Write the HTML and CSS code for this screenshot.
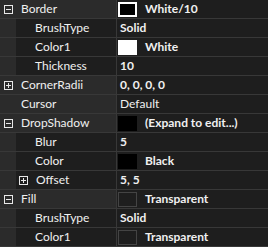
FILE: index.html
```html
<!DOCTYPE html>
<html>
<head>
<meta charset="utf-8">
<link rel="stylesheet" href="styles.css">
</head>
<body>
<div class="grid">
  <div class="row top">
    <div class="name"><svg class="exp" width="9" height="9" viewBox="0 0 9 9"><rect x="0.5" y="0.5" width="8" height="8" fill="none" stroke="#e8e8e8"/><path d="M2 4.5h5" stroke="#e8e8e8"/></svg><span class="label">Border</span></div>
    <div class="val"><span class="sw sw-outline"></span><span class="v">White/10</span></div>
  </div>
  <div class="row child">
    <div class="name"><span class="label">BrushType</span></div>
    <div class="val"><span class="v">Solid</span></div>
  </div>
  <div class="row child">
    <div class="name"><span class="label">Color1</span></div>
    <div class="val"><span class="sw sw-white"></span><span class="v">White</span></div>
  </div>
  <div class="row child">
    <div class="name"><span class="label">Thickness</span></div>
    <div class="val"><span class="v">10</span></div>
  </div>
  <div class="row top">
    <div class="name"><svg class="exp" width="9" height="9" viewBox="0 0 9 9"><rect x="0.5" y="0.5" width="8" height="8" fill="none" stroke="#e8e8e8"/><path d="M2 4.5h5M4.5 2v5" stroke="#e8e8e8"/></svg><span class="label">CornerRadii</span></div>
    <div class="val"><span class="v">0, 0, 0, 0</span></div>
  </div>
  <div class="row top">
    <div class="name"><span class="label nexp">Cursor</span></div>
    <div class="val"><span class="v reg">Default</span></div>
  </div>
  <div class="row top">
    <div class="name"><svg class="exp" width="9" height="9" viewBox="0 0 9 9"><rect x="0.5" y="0.5" width="8" height="8" fill="none" stroke="#e8e8e8"/><path d="M2 4.5h5" stroke="#e8e8e8"/></svg><span class="label">DropShadow</span></div>
    <div class="val"><span class="sw sw-black"></span><span class="v">(Expand to edit...)</span></div>
  </div>
  <div class="row child">
    <div class="name"><span class="label">Blur</span></div>
    <div class="val"><span class="v">5</span></div>
  </div>
  <div class="row child">
    <div class="name"><span class="label">Color</span></div>
    <div class="val"><span class="sw sw-black"></span><span class="v">Black</span></div>
  </div>
  <div class="row child">
    <div class="name sub"><svg class="exp" width="9" height="9" viewBox="0 0 9 9"><rect x="0.5" y="0.5" width="8" height="8" fill="none" stroke="#e8e8e8"/><path d="M2 4.5h5M4.5 2v5" stroke="#e8e8e8"/></svg><span class="label">Offset</span></div>
    <div class="val"><span class="v">5, 5</span></div>
  </div>
  <div class="row top">
    <div class="name"><svg class="exp" width="9" height="9" viewBox="0 0 9 9"><rect x="0.5" y="0.5" width="8" height="8" fill="none" stroke="#e8e8e8"/><path d="M2 4.5h5" stroke="#e8e8e8"/></svg><span class="label">Fill</span></div>
    <div class="val"><span class="sw sw-trans"></span><span class="v">Transparent</span></div>
  </div>
  <div class="row child">
    <div class="name"><span class="label">BrushType</span></div>
    <div class="val"><span class="v">Solid</span></div>
  </div>
  <div class="row child">
    <div class="name"><span class="label">Color1</span></div>
    <div class="val"><span class="sw sw-trans"></span><span class="v">Transparent</span></div>
  </div>
</div>
</body>
</html>
```

FILE: styles.css
```css
html, body {
  margin: 0;
  padding: 0;
  background: #1e1e1e;
}
.grid {
  width: 268px;
  font-family: Lato, "Noto Sans", sans-serif;
  font-size: 12px;
  color: #f0f0f0;
}
.row {
  display: flex;
  height: 18px;
  border-bottom: 1px solid #383838;
}
.name {
  width: 117px;
  border-right: 1px solid #383838;
  display: flex;
  align-items: center;
  background: #2b2b2b;
  box-sizing: border-box;
  padding-left: 4px;
}
.child .name {
  background: #1e1e1e;
  box-shadow: inset 16px 0 0 #2b2b2b;
  padding-left: 35px;
}
.child .name.sub {
  padding-left: 19px;
}
.exp {
  flex: none;
  margin-right: 8px;
}
.label {
  white-space: nowrap;
  line-height: 18px;
}
.nexp {
  margin-left: 17px;
}
.val {
  flex: 1;
  display: flex;
  align-items: center;
  background: #1e1e1e;
  padding-left: 3px;
}
.v {
  font-weight: bold;
  white-space: nowrap;
  line-height: 18px;
}
.v.reg {
  font-weight: normal;
}
.sw {
  flex: none;
  width: 19px;
  height: 15px;
  box-sizing: border-box;
  margin-left: -2px;
  margin-right: 8px;
}
.sw-outline {
  background: #000;
  border: 2px solid #fff;
}
.sw-white {
  background: #fff;
}
.sw-black {
  background: #000;
}
.sw-trans {
  border: 1px solid #444;
}
```
